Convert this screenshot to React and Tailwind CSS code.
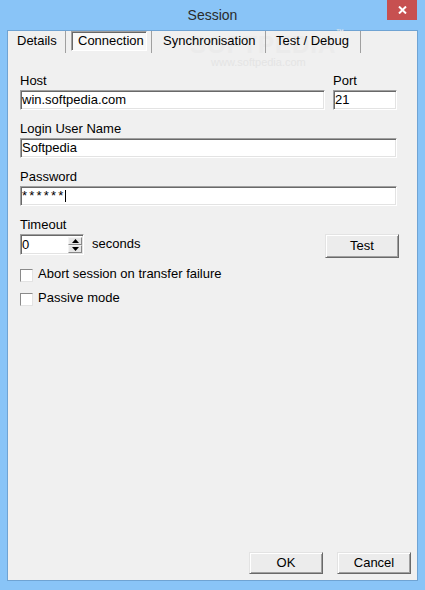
import React from 'react';

const sunken =
  'border border-t-[#a0a0a0] border-l-[#a0a0a0] border-b-white border-r-white shadow-[inset_1px_1px_0_#696969,inset_-1px_-1px_0_#e3e3e3] bg-white';

const raised =
  'border border-t-[#e3e3e3] border-l-[#e3e3e3] border-b-[#696969] border-r-[#696969] shadow-[inset_1px_1px_0_#ffffff,inset_-1px_-1px_0_#a0a0a0] bg-[#ececec]';

function Field({ label, value, className = '', children }) {
  return (
    <div className={className}>
      <div className="leading-[16px]">{label}</div>
      <div className={`${sunken} mt-[1px] h-[20px] pl-[1px] leading-[18px]`}>
        {children || value}
      </div>
    </div>
  );
}

function Button({ children, className = '' }) {
  return (
    <div className={`${raised} flex w-[74px] items-center justify-center ${className}`}>
      {children}
    </div>
  );
}

function Check({ label }) {
  return (
    <div className="flex h-[16px] items-start">
      <div className="mt-[3px] h-[13px] w-[13px] border border-t-[#8a8a8a] border-l-[#8a8a8a] border-b-[#e3e3e3] border-r-[#e3e3e3] bg-white" />
      <span className="ml-[5px] leading-[16px]">{label}</span>
    </div>
  );
}

function SpinArrow({ up }) {
  return (
    <div className="flex h-[8px] w-[14px] items-center justify-center border border-t-[#f4f4f4] border-l-[#f4f4f4] border-b-[#888] border-r-[#888] bg-[#e6e6e6]">
      <svg width="7" height="4" viewBox="0 0 7 4">
        {up ? <path d="M0 4 L3.5 0 L7 4 Z" fill="#000" /> : <path d="M0 0 L3.5 4 L7 0 Z" fill="#000" />}
      </svg>
    </div>
  );
}

export default function App() {
  return (
    <div className="flex h-[590px] w-[425px] flex-col overflow-hidden bg-[#89c4f7] font-['Liberation_Sans',Arial,sans-serif] text-[13px] text-black">
      {/* title bar */}
      <div className="relative flex h-[30px] justify-center">
        <span className="mt-[6px] text-[14px] leading-[18px] text-[#2b2b2b]">Session</span>
        <div className="absolute right-[8px] top-0 flex h-[20px] w-[30px] items-center justify-center bg-[#c75050]">
          <svg width="9" height="8" viewBox="0 0 9 8">
            <path d="M1 0.5 L8 7.5 M8 0.5 L1 7.5" stroke="#fff" strokeWidth="2" />
          </svg>
        </div>
      </div>

      {/* client area */}
      <div className="relative mx-[7px] mb-[9px] flex flex-1 flex-col border border-[#6fa3d3] bg-[#f0f0f0]">
        {/* watermark, sits behind the tab labels */}
        <div className="pointer-events-none absolute left-[182px] top-[-4px] text-[24px] font-bold tracking-[1px] text-[#ebebeb]">
          SOFTPEDIA<span className="align-top text-[8px]">™</span>
        </div>
        <div className="pointer-events-none absolute left-[203px] top-[23px] text-[11px] text-[#e4e4e4]">www.softpedia.com</div>

        {/* tabs */}
        <div className="relative flex h-[22px]">
          <div className="w-[58px] border-r border-[#a0a0a0] pl-[9px] pt-[2px] leading-[16px]">Details</div>
          <div className="w-[86px] border-r border-[#a0a0a0] pl-[5px]">
            <div className="h-[20px] w-[76px] border border-t-[#a0a0a0] border-l-[#a0a0a0] border-b-white border-r-white bg-[#f8f8f8] pl-[6px] leading-[17px] shadow-[inset_1px_1px_0_#696969]">
              Connection
            </div>
          </div>
          <div className="w-[114px] border-r border-[#a0a0a0] pl-[11px] pt-[2px] leading-[16px]">Synchronisation</div>
          <div className="w-[95px] border-r border-[#a0a0a0] pl-[10px] pt-[2px] leading-[16px]">Test / Debug</div>
        </div>

        {/* form */}
        <div className="relative flex flex-col pl-[12px] pr-[20px] pt-[20px]">
          <div className="flex gap-[8px]">
            <Field label="Host" value="win.softpedia.com" className="flex-1" />
            <Field label="Port" value="21" className="w-[64px]" />
          </div>
          <Field label="Login User Name" value="Softpedia" className="mt-[11px]" />
          <Field label="Password" className="mt-[11px]">
            <div className="flex h-full items-center">
              <span className="tracking-[2.2px]">******</span>
              <span className="ml-[-1px] h-[12px] w-[1px] bg-black" />
            </div>
          </Field>

          <div className="mt-[11px] leading-[16px]">Timeout</div>
          <div className="mt-[1px] flex items-start">
            <div className={`${sunken} flex h-[21px] w-[64px] items-center pl-[1px]`}>
              <span className="flex-1 leading-[16px]">0</span>
              <div className="mr-[1px] flex flex-col">
                <SpinArrow up />
                <SpinArrow />
              </div>
            </div>
            <span className="ml-[8px] mt-[2px] leading-[16px]">seconds</span>
            <div className="flex-1" />
            <Button className="mr-[-2px] h-[24px]">Test</Button>
          </div>

          <div className="mt-[8px] flex flex-col gap-[8px]">
            <Check label="Abort session on transfer failure" />
            <Check label="Passive mode" />
          </div>
        </div>

        <div className="flex-1" />

        <div className="flex justify-end gap-[14px] pb-[6px] pr-[6px]">
          <Button className="h-[22px]">OK</Button>
          <Button className="h-[22px]">Cancel</Button>
        </div>
      </div>
    </div>
  );
}
